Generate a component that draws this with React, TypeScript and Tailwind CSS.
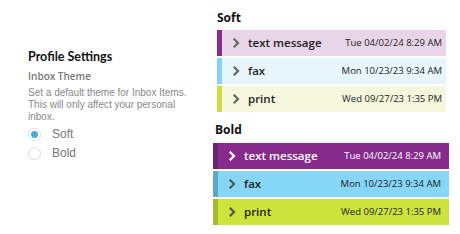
import React from "react";

type Row = { label: string; date: string; bg: string; border: string; text: string; chev: string };

const Chevron = ({ color }: { color: string }) => (
  <svg width="7" height="10" viewBox="0 0 7 10" className="shrink-0">
    <polyline points="1.5,1.5 5,5 1.5,8.5" fill="none" stroke={color} strokeWidth="2.2" strokeLinecap="square" />
  </svg>
);

const soft: Row[] = [
  { label: "text message", date: "Tue 04/02/24 8:29 AM", bg: "bg-[#e8d6e8]", border: "border-[#8a2b8c]", text: "text-[#222]", chev: "#666" },
  { label: "fax", date: "Mon 10/23/23 9:34 AM", bg: "bg-[#e7f6fd]", border: "border-[#83d4f4]", text: "text-[#222]", chev: "#666" },
  { label: "print", date: "Wed 09/27/23 1:35 PM", bg: "bg-[#f4f7dc]", border: "border-[#c9de3c]", text: "text-[#222]", chev: "#666" },
];
const bold: Row[] = [
  { label: "text message", date: "Tue 04/02/24 8:29 AM", bg: "bg-[#862b8c]", border: "border-[#6b1f70]", text: "text-white", chev: "#fff" },
  { label: "fax", date: "Mon 10/23/23 9:34 AM", bg: "bg-[#86d6f7]", border: "border-[#5ea9c9]", text: "text-[#222]", chev: "#555" },
  { label: "print", date: "Wed 09/27/23 1:35 PM", bg: "bg-[#cde43c]", border: "border-[#a7b92e]", text: "text-[#222]", chev: "#555" },
];

const RowList = ({ rows, pr }: { rows: Row[]; pr: string }) => (
  <div className="flex flex-col gap-[2px]">
    {rows.map((r) => (
      <div key={r.label} className={`flex items-center h-[26px] border-l-[5px] ${r.bg} ${r.border} ${r.text} ${pr}`}>
        <div className="w-[11px]" />
        <Chevron color={r.chev} />
        <span className="ml-[8px] text-[11.5px] font-semibold leading-none">{r.label}</span>
        <span className="ml-auto text-[9.5px] leading-none">{r.date}</span>
      </div>
    ))}
  </div>
);

export default function App() {
  return (
    <div className="w-[460px] h-[234px] bg-white flex" style={{ fontFamily: '"Open Sans", sans-serif' }}>
      <div className="w-[213px] shrink-0 pl-[28px] pt-[49px]">
        <div className="text-[12.5px] font-bold text-[#111] leading-[15px]" style={{ fontFamily: 'Lato, "Open Sans", sans-serif' }}>
          Profile Settings
        </div>
        <div className="mt-[6px] text-[10px] font-semibold text-[#777] leading-[12px]">Inbox Theme</div>
        <div className="mt-[5px] text-[10px] text-[#888] leading-[12px]" style={{ fontFamily: '"Liberation Sans", Arial, sans-serif' }}>
          Set a default theme for Inbox Items.
          <br />
          This will only affect your personal
          <br />
          inbox.
        </div>
        <div className="mt-[4px] flex flex-col gap-[5px]" style={{ fontFamily: '"Liberation Sans", Arial, sans-serif' }}>
          <div className="flex items-center h-[14px]">
            <div className="w-[13px] h-[13px] rounded-full border border-[#ddd] flex items-center justify-center">
              <div className="w-[7px] h-[7px] rounded-full bg-[#4fa9d6]" />
            </div>
            <span className="ml-[11px] text-[12px] text-[#777]">Soft</span>
          </div>
          <div className="flex items-center h-[14px]">
            <div className="w-[13px] h-[13px] rounded-full border border-[#e3d8e3]" />
            <span className="ml-[11px] text-[12px] text-[#777]">Bold</span>
          </div>
        </div>
      </div>
      <div className="flex-1 pt-[10px]">
        <div className="pl-[4px] pr-[14px]">
          <div className="text-[12px] font-bold text-[#111] leading-[16px]">Soft</div>
          <div className="mt-[4px]">
            <RowList rows={soft} pr="pr-[4px]" />
          </div>
        </div>
        <div className="pl-[0px] pr-[11px] mt-[10px]">
          <div className="pl-[2px] text-[12px] font-bold text-[#111] leading-[16px]">Bold</div>
          <div className="mt-[5px]">
            <RowList rows={bold} pr="pr-[8px]" />
          </div>
        </div>
      </div>
    </div>
  );
}
